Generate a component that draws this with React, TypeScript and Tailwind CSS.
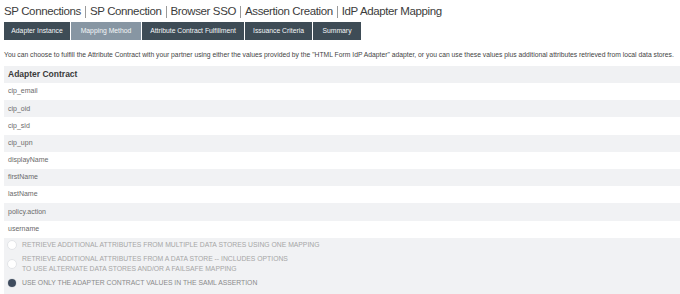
const tabs = [
  { label: 'Adapter Instance', w: 'w-[66px]' },
  { label: 'Mapping Method', w: 'w-[70px]', active: true },
  { label: 'Attribute Contract Fulfillment', w: 'w-[102px]' },
  { label: 'Issuance Criteria', w: 'w-[67px]' },
  { label: 'Summary', w: 'w-[48px]' },
]

const crumbs = ['SP Connections', 'SP Connection', 'Browser SSO', 'Assertion Creation', 'IdP Adapter Mapping']

const attributes = [
  'cip_email',
  'cip_oid',
  'cip_sid',
  'cip_upn',
  'displayName',
  'firstName',
  'lastName',
  'policy.action',
  'username',
]

function Radio({ checked }: { checked?: boolean }) {
  return (
    <span className="flex h-[10px] w-[10px] shrink-0 items-center justify-center rounded-full border border-[#e3e5e8] bg-white">
      {checked && <span className="h-[8px] w-[8px] rounded-full bg-[#3f4c5e]" />}
    </span>
  )
}

export default function App() {
  return (
    <div className="h-[294px] w-[680px] overflow-hidden bg-white pl-[4px] font-['Liberation_Sans',Arial,sans-serif]">
      {/* breadcrumb title */}
      <div className="flex h-[22px] items-center pt-[1px] text-[11.5px] tracking-[-0.38px] text-[#3c3c3c]">
        {crumbs.map((c, i) => (
          <span key={c} className="flex items-center">
            {i > 0 && <span className="mx-[4px] h-[12px] w-px bg-[#9a9a9a]" />}
            {c}
          </span>
        ))}
      </div>

      {/* tabs */}
      <div className="flex h-[18px] gap-px">
        {tabs.map((t) => (
          <div
            key={t.label}
            className={`${t.w} flex items-center justify-center text-[6.8px] text-[#f4f6f8] ${
              t.active ? 'bg-[#8796a3]' : 'bg-[#3e4c56]'
            }`}
          >
            {t.label}
          </div>
        ))}
      </div>

      <p className="mt-[11px] h-[15px] whitespace-nowrap text-[6.77px] leading-[8px] text-[#444]">
        You can choose to fulfill the Attribute Contract with your partner using either the values provided by the "HTML Form IdP Adapter" adapter, or you can use these values plus additional attributes retrieved from local data stores.
      </p>

      {/* adapter contract table */}
      <div className="flex h-[17px] items-center bg-[#f0f1f3] pl-[4px] text-[8.5px] font-bold text-[#3a3a3a]">
        Adapter Contract
      </div>
      {attributes.map((a, i) => (
        <div
          key={a}
          className={`flex h-[17.2px] items-center pl-[4px] text-[7px] text-[#6a6a6a] ${
            i % 2 === 1 ? 'bg-[#f1f2f4]' : 'bg-white'
          }`}
        >
          {a}
        </div>
      ))}

      {/* mapping method options */}
      <div className="flex flex-col gap-[4px] bg-[#f1f2f4] pb-[10px] pl-[3px] pt-[2px] text-[6.8px] uppercase text-[#a6a6a6]">
        <div className="flex h-[10px] items-center gap-[5px]">
          <Radio />
          <span>Retrieve additional attributes from multiple data stores using one mapping</span>
        </div>
        <div className="flex h-[20px] items-center gap-[5px]">
          <Radio />
          <span className="leading-[10px]">
            Retrieve additional attributes from a data store -- includes options
            <br />
            to use alternate data stores and/or a failsafe mapping
          </span>
        </div>
        <div className="flex h-[10px] items-center gap-[5px]">
          <Radio checked />
          <span className="text-[#8a8a8a]">Use only the adapter contract values in the SAML assertion</span>
        </div>
      </div>
    </div>
  )
}
